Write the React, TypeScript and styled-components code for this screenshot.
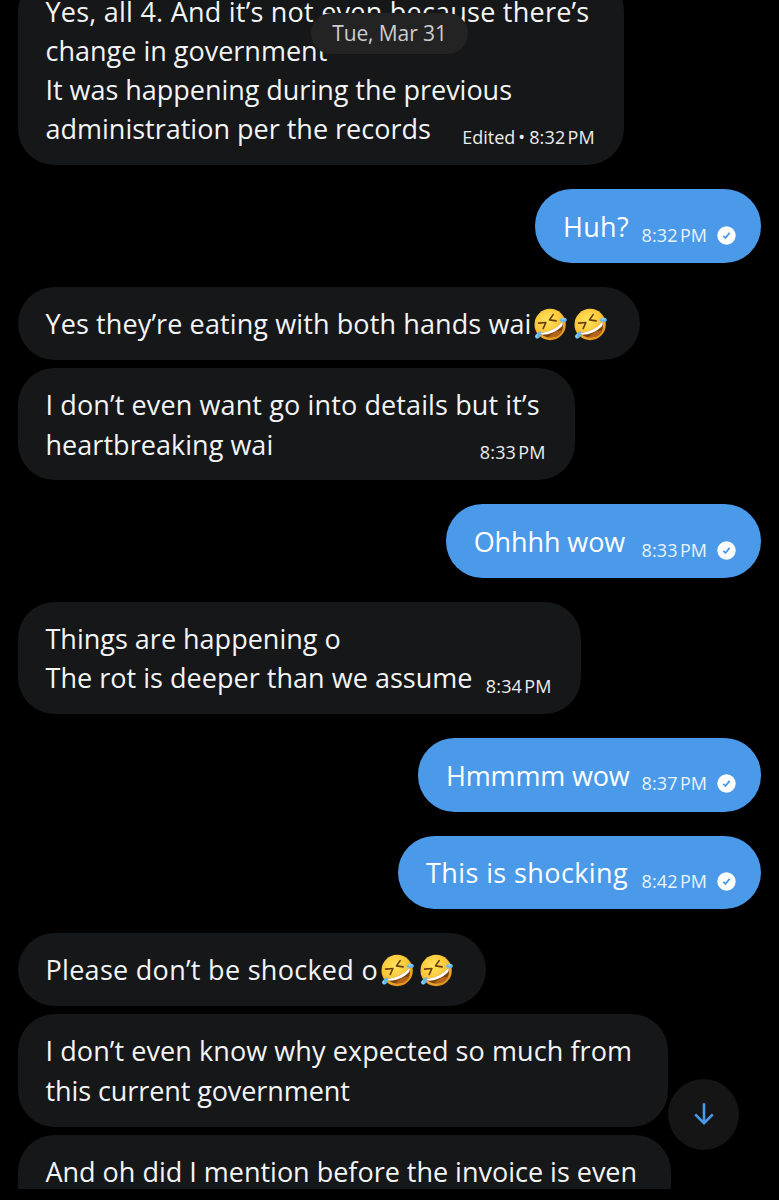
import React from "react";
import styled, { createGlobalStyle, css } from "styled-components";

const GlobalStyle = createGlobalStyle`
  * { box-sizing: border-box; }
  body {
    margin: 0;
    background: #000;
    font-family: "Open Sans", "Noto Sans", sans-serif;
  }
`;

const Screen = styled.main`
  position: relative;
  width: 779px;
  height: 1200px;
  overflow: hidden;
  background: #000;
`;

const Thread = styled.section`
  display: flex;
  flex-direction: column;
  height: 1189px;
  padding: 0 18px;
  overflow: hidden;
`;

const MessageList = styled.div`
  display: flex;
  flex-direction: column;
  gap: 24px;
  margin-top: -25.4px;
`;

const Group = styled.div<{ $mine?: boolean }>`
  display: flex;
  flex-direction: column;
  align-items: ${(p) => (p.$mine ? "flex-end" : "flex-start")};
  gap: 8px;
`;

const Bubble = styled.article<{ $mine?: boolean; $width: number }>`
  width: ${(p) => p.$width}px;
  flex: none;
  padding: 17.3px 29.4px 16.8px 27.5px;
  border-radius: 36.5px;
  color: #f3f4f5;
  background: #161719;
  ${(p) =>
    p.$mine &&
    css`
      padding-right: 25px;
      padding-left: 28px;
      color: #fff;
      background: #4b99e9;
    `}
`;

const Line = styled.div`
  display: flex;
  justify-content: space-between;
  height: 39.2px;
  font-size: 27px;
  line-height: 39.2px;
  white-space: nowrap;
`;

const Words = styled.span<{ $tracking: number }>`
  letter-spacing: ${(p) => p.$tracking}px;
`;

const Phrase = styled.span`
  display: flex;
  align-items: center;
`;

const EmojiRow = styled.span`
  display: flex;
  gap: 6.5px;
  margin: 1px 0 0 3px;
`;

const Meta = styled.span<{ $mine?: boolean }>`
  display: flex;
  align-items: center;
  height: 39.2px;
  margin-top: 8.8px;
  font-size: 18px;
  color: ${(p) => (p.$mine ? "#e8f3fd" : "#eceded")};
`;

const Edited = styled.span`
  margin-right: 4px;
  letter-spacing: 0;
  word-spacing: -1.6px;
`;

const Time = styled.time`
  letter-spacing: 0.15px;
  word-spacing: -2.6px;
`;

const Receipt = styled.svg`
  width: 19px;
  height: 19px;
  margin-left: 9.8px;
`;

const DatePill = styled.div`
  position: absolute;
  top: 13.3px;
  left: 311px;
  width: 157px;
  height: 41.2px;
  border-radius: 21px;
  background: #232324;
  color: #cdcdce;
  font-size: 21px;
  line-height: 40.6px;
  letter-spacing: -0.1px;
  text-align: center;
`;

const JumpButton = styled.button`
  position: absolute;
  top: 1078.5px;
  left: 667.8px;
  display: grid;
  place-items: center;
  width: 71.5px;
  height: 71.5px;
  padding: 0;
  border: 0;
  border-radius: 50%;
  background: #151515;
`;

function RollingLaugh({ id }: { id: string }) {
  return (
    <svg width="33" height="33" viewBox="0 0 100 100" aria-label="rolling on the floor laughing">
      <defs>
        <radialGradient id={id} cx="42%" cy="36%" r="66%">
          <stop offset="0" stopColor="#ffe45c" />
          <stop offset="0.65" stopColor="#fbc536" />
          <stop offset="1" stopColor="#e08e1c" />
        </radialGradient>
      </defs>
      <circle cx="49" cy="50" r="47.5" fill={`url(#${id})`} />
      <g fill="none" stroke="#6b3d0c" strokeWidth="5" strokeLinecap="round" strokeLinejoin="round">
        <path d="M14 46 36 44 28 62" />
        <path d="M58 20 47 36 67 39" />
      </g>
      <path d="M20 76C44 74 70 62 86 42 94 62 80 87 56 89 40 91 26 86 20 76Z" fill="#7e430b" />
      <path d="M20 76C44 74 70 62 86 42 88 48 87 53 84 56 68 72 46 81 25 81Z" fill="#fff" />
      <path d="M45 88C50 78 72 67 86 69 80 82 66 91 45 88Z" fill="#b5651a" />
      <path d="M77 39C80 28 95 27 99 34 101 42 92 46 77 39Z" fill="#62b9ed" />
      <path d="M20 70C23 83 17 93 9 93 0 91-1 80 20 70Z" fill="#62b9ed" />
      <path d="M84 36C88 31 93 32 95 35M8 83C6 86 7 89 10 89" fill="none" stroke="#b9e5fc" strokeWidth="3" />
    </svg>
  );
}

interface TextLine {
  text: string;
  tracking: number;
}

interface Message {
  id: string;
  width: number;
  lines: TextLine[];
  time?: string;
  edited?: boolean;
  laughs?: boolean;
}

interface MessageGroup {
  mine?: boolean;
  messages: Message[];
}

const groups: MessageGroup[] = [
  {
    messages: [
      {
        id: "records",
        width: 606.3,
        edited: true,
        time: "8:32 PM",
        lines: [
          { text: "Yes, all 4. And it’s not even because there’s", tracking: 0.235 },
          { text: "change in government", tracking: 0 },
          { text: "It was happening during the previous", tracking: -0.03 },
          { text: "administration per the records", tracking: 0 },
        ],
      },
    ],
  },
  { mine: true, messages: [{ id: "huh", width: 226, time: "8:32 PM", lines: [{ text: "Huh?", tracking: 0.3 }] }] },
  {
    messages: [
      {
        id: "hands",
        width: 622,
        laughs: true,
        lines: [{ text: "Yes they’re eating with both hands wai", tracking: 0.11 }],
      },
      {
        id: "details",
        width: 557,
        time: "8:33 PM",
        lines: [
          { text: "I don’t even want go into details but it’s", tracking: 0.12 },
          { text: "heartbreaking wai", tracking: 0.04 },
        ],
      },
    ],
  },
  { mine: true, messages: [{ id: "oh", width: 315.3, time: "8:33 PM", lines: [{ text: "Ohhhh wow", tracking: -0.1 }] }] },
  {
    messages: [
      {
        id: "rot",
        width: 563,
        time: "8:34 PM",
        lines: [
          { text: "Things are happening o", tracking: 0 },
          { text: "The rot is deeper than we assume", tracking: 0.03 },
        ],
      },
    ],
  },
  { mine: true, messages: [{ id: "hm", width: 343, time: "8:37 PM", lines: [{ text: "Hmmmm wow", tracking: -0.15 }] }] },
  {
    mine: true,
    messages: [{ id: "shocking", width: 363, time: "8:42 PM", lines: [{ text: "This is shocking", tracking: 0.4 }] }],
  },
  {
    messages: [
      { id: "please", width: 467.7, laughs: true, lines: [{ text: "Please don’t be shocked o", tracking: 0.29 }] },
      {
        id: "expected",
        width: 650,
        lines: [
          { text: "I don’t even know why expected so much from", tracking: 0.08 },
          { text: "this current government", tracking: -0.09 },
        ],
      },
      {
        id: "invoice",
        width: 652.8,
        lines: [{ text: "And oh did I mention before the invoice is even", tracking: -0.01 }, { text: "", tracking: 0 }],
      },
    ],
  },
];

function MessageBubble({ message, mine }: { message: Message; mine?: boolean }) {
  const last = message.lines.length - 1;
  return (
    <Bubble $mine={mine} $width={message.width}>
      {message.lines.map((line, i) => (
        <Line key={i}>
          <Phrase>
            <Words $tracking={line.tracking}>{line.text}</Words>
            {message.laughs && (
              <EmojiRow>
                <RollingLaugh id={`${message.id}-a`} />
                <RollingLaugh id={`${message.id}-b`} />
              </EmojiRow>
            )}
          </Phrase>
          {i === last && message.time && (
            <Meta $mine={mine}>
              {message.edited && <Edited>Edited •</Edited>}
              <Time>{message.time}</Time>
              {mine && (
                <Receipt viewBox="0 0 19 19">
                  <circle cx="9.5" cy="9.5" r="9.2" fill="#fff" />
                  <path d="m6.3 9.9 2.2 2.1 4.1-5.1" fill="none" stroke="#4b99e9" strokeWidth="1.8" />
                </Receipt>
              )}
            </Meta>
          )}
        </Line>
      ))}
    </Bubble>
  );
}

export default function App() {
  return (
    <>
      <GlobalStyle />
      <Screen>
        <Thread>
          <MessageList>
            {groups.map((group) => (
              <Group key={group.messages[0].id} $mine={group.mine}>
                {group.messages.map((message) => (
                  <MessageBubble key={message.id} message={message} mine={group.mine} />
                ))}
              </Group>
            ))}
          </MessageList>
        </Thread>
        <DatePill>Tue, Mar 31</DatePill>
        <JumpButton aria-label="Jump to latest message">
          <svg width="24" height="24" viewBox="0 0 24 24" fill="none" stroke="#4b99e9" strokeWidth="2.6">
            <path d="M12 1.2v20M3.2 12.4l8.8 8.8 8.8-8.8" />
          </svg>
        </JumpButton>
      </Screen>
    </>
  );
}
